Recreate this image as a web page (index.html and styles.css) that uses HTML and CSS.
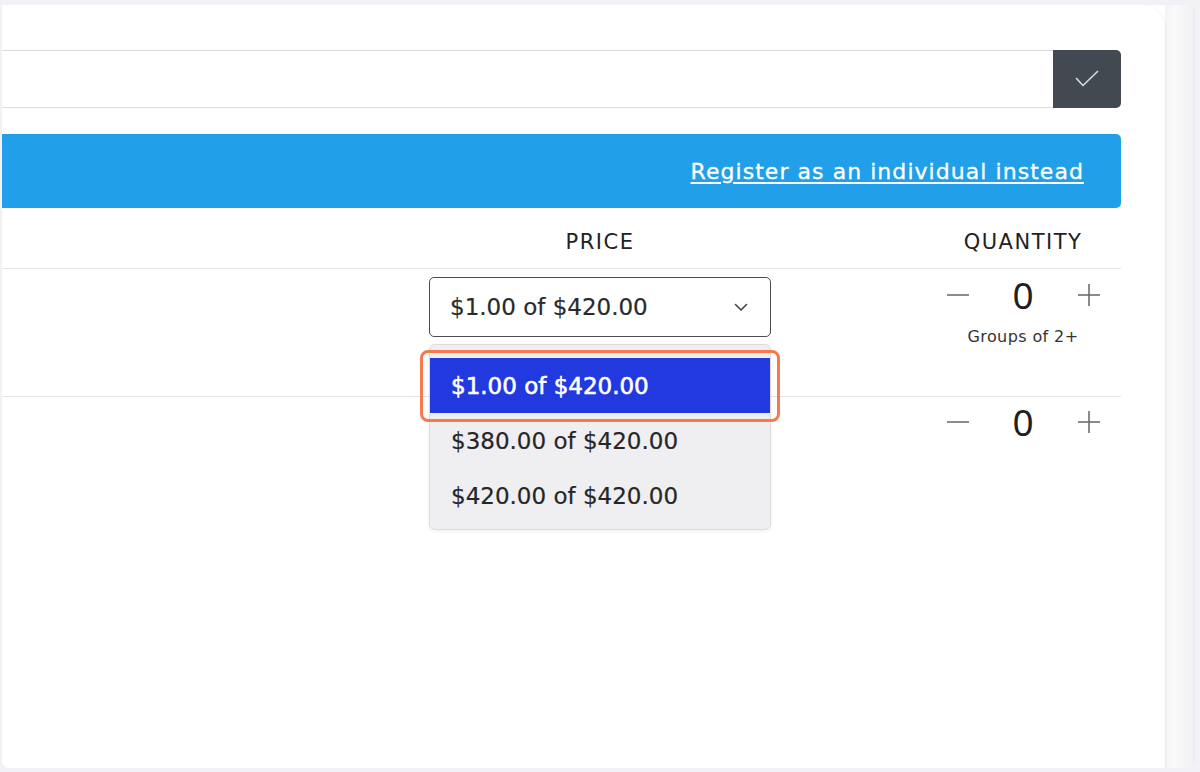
FILE: index.html
```html
<!DOCTYPE html>
<html lang="en">
<head>
<meta charset="utf-8">
<title>Group registration</title>
<link rel="stylesheet" href="styles.css">
</head>
<body>
<div class="window">
  <div class="card">
    <div class="code-row">
      <div class="code-input"></div>
      <button class="apply" type="button" aria-label="Apply">
        <svg width="24" height="18" viewBox="0 0 24 18"><path d="M1.5 8.5 L8 15.5 L22.5 1.5" fill="none" stroke="#d3d6da" stroke-width="1.7" stroke-linecap="round" stroke-linejoin="round"/></svg>
      </button>
    </div>
    <div class="banner">
      <a class="banner-link" href="#">Register as an individual instead</a>
    </div>
    <div class="tickets">
      <div class="thead">
        <span></span>
        <span class="th">PRICE</span>
        <span></span>
        <span class="th">QUANTITY</span>
      </div>
      <div class="trow first">
        <div class="name"></div>
        <div class="price-cell">
          <div class="select">
            <span>$1.00 of $420.00</span>
            <svg width="14" height="9" viewBox="0 0 14 9"><path d="M1.5 1.5 L7 7 L12.5 1.5" fill="none" stroke="#444" stroke-width="1.6" stroke-linecap="round" stroke-linejoin="round"/></svg>
          </div>
          <div class="dropdown">
            <div class="option active">$1.00 of $420.00</div>
            <div class="option">$380.00 of $420.00</div>
            <div class="option">$420.00 of $420.00</div>
          </div>
        </div>
        <div></div>
        <div class="qty-cell">
          <div class="qty">
            <svg class="step" width="22" height="22" viewBox="0 0 22 22"><path d="M0 11 H22" stroke="#666" stroke-width="1.5"/></svg>
            <span class="num">0</span>
            <svg class="step" width="22" height="22" viewBox="0 0 22 22"><path d="M0 11 H22 M11 0 V22" stroke="#666" stroke-width="1.5"/></svg>
          </div>
          <div class="note">Groups of 2+</div>
        </div>
      </div>
      <div class="trow last">
        <div class="name"></div>
        <div></div>
        <div></div>
        <div class="qty-cell">
          <div class="qty">
            <svg class="step" width="22" height="22" viewBox="0 0 22 22"><path d="M0 11 H22" stroke="#666" stroke-width="1.5"/></svg>
            <span class="num">0</span>
            <svg class="step" width="22" height="22" viewBox="0 0 22 22"><path d="M0 11 H22 M11 0 V22" stroke="#666" stroke-width="1.5"/></svg>
          </div>
        </div>
      </div>
    </div>
  </div>
  <div class="strip"></div>
</div>
</body>
</html>
```

FILE: styles.css
```css
* { box-sizing: border-box; }

html, body {
  margin: 0;
  padding: 0;
  background: #f2f1f5;
  font-family: "DejaVu Sans", "Noto Sans", sans-serif;
  color: #222;
}

.window {
  display: flex;
  margin: 5px 0 0 2px;
  width: 1193px;
  height: 763px;
  border-radius: 0 9px 8px 7px;
  overflow: hidden;
  background: #fff;
  border-right: 2px solid #ececf0;
}

.card {
  width: 1163px;
  flex: none;
  background: #fff;
  border-radius: 0 24px 0 0;
  padding: 45px 44px 0 0;
  position: relative;
  z-index: 1;
  box-shadow: 1px 0 2px rgba(0, 0, 0, 0.05);
}

.strip {
  flex: 1;
  background: linear-gradient(to right, #f4f4f5 0%, #fafafb 35%, #f1f1f3 100%);
}

/* code input row */
.code-row {
  display: flex;
  height: 58px;
}

.code-input {
  flex: 1;
  border-top: 1px solid #dcdcdf;
  border-bottom: 1px solid #dcdcdf;
}

.apply {
  width: 68px;
  border: 0;
  padding: 0;
  background: #434950;
  border-radius: 0 5px 5px 0;
  display: flex;
  align-items: center;
  justify-content: center;
}

/* banner */
.banner {
  margin-top: 26px;
  height: 74px;
  background: #219fe8;
  border-radius: 0 5px 5px 0;
  display: flex;
  align-items: center;
  justify-content: flex-end;
  padding: 0 37px 0 0;
}

.banner-link {
  color: #fff;
  font-size: 22px;
  letter-spacing: 1.05px;
  -webkit-text-stroke: 0.3px #fff;
  text-decoration: underline;
  text-underline-offset: 3px;
  text-decoration-thickness: 2px;
}

/* tickets table */
.tickets {
  display: flex;
  flex-direction: column;
}

.thead,
.trow {
  display: grid;
  grid-template-columns: 427px 342px 154px 196px;
}

.thead {
  height: 61px;
  align-items: end;
  padding-bottom: 13px;
  border-bottom: 1px solid #e4e4e6;
}

.th {
  text-align: center;
  font-size: 21px;
  line-height: 26px;
  letter-spacing: 1.5px;
  color: #222;
}

.trow {
  height: 128px;
  border-bottom: 1px solid #e4e4e6;
  align-items: start;
}

.trow.last {
  border-bottom: 0;
}

.first {
  padding-top: 8px;
}

.price-cell {
  position: relative;
}

.select {
  height: 60px;
  border: 1.5px solid #4d4d4f;
  border-radius: 5px;
  display: flex;
  align-items: center;
  justify-content: space-between;
  padding: 0 22px 0 20px;
  font-size: 23px;
  color: #2a2a2a;
  background: #fff;
  -webkit-text-stroke: 0.2px #2a2a2a;
}

.dropdown {
  position: absolute;
  left: 0;
  top: 67px;
  width: 342px;
  height: 186px;
  background: #efeff1;
  border: 1px solid #dcdcdf;
  border-radius: 6px;
  padding-top: 13px;
  box-shadow: 0 2px 4px rgba(0, 0, 0, 0.05);
  z-index: 3;
}

.option {
  height: 55px;
  display: flex;
  align-items: center;
  padding-left: 21px;
  font-size: 23px;
  color: #262626;
  -webkit-text-stroke: 0.2px #262626;
}

.option.active {
  position: relative;
  background: #2139df;
  color: #fff;
  -webkit-text-stroke: 0.6px #fff;
}

.option.active::after {
  content: "";
  position: absolute;
  top: -8px;
  left: -10px;
  right: -10px;
  bottom: -9px;
  border: 3px solid #f77a4d;
  border-radius: 8px;
}

.qty-cell {
  display: flex;
  flex-direction: column;
  align-items: center;
  padding-top: 7px;
}

.first .qty-cell {
  padding-top: 0;
}

.qty {
  display: flex;
  align-items: center;
  gap: 43px;
  height: 36px;
}

.step {
  display: block;
}

.num {
  width: 23px;
  text-align: center;
  font-family: "Noto Sans", "DejaVu Sans", sans-serif;
  font-size: 37px;
  font-weight: 400;
  line-height: 36px;
  color: #1e1e1e;
}

.note {
  margin-top: 14px;
  font-size: 16px;
  line-height: 20px;
  letter-spacing: 0.4px;
  color: #333;
}
```
